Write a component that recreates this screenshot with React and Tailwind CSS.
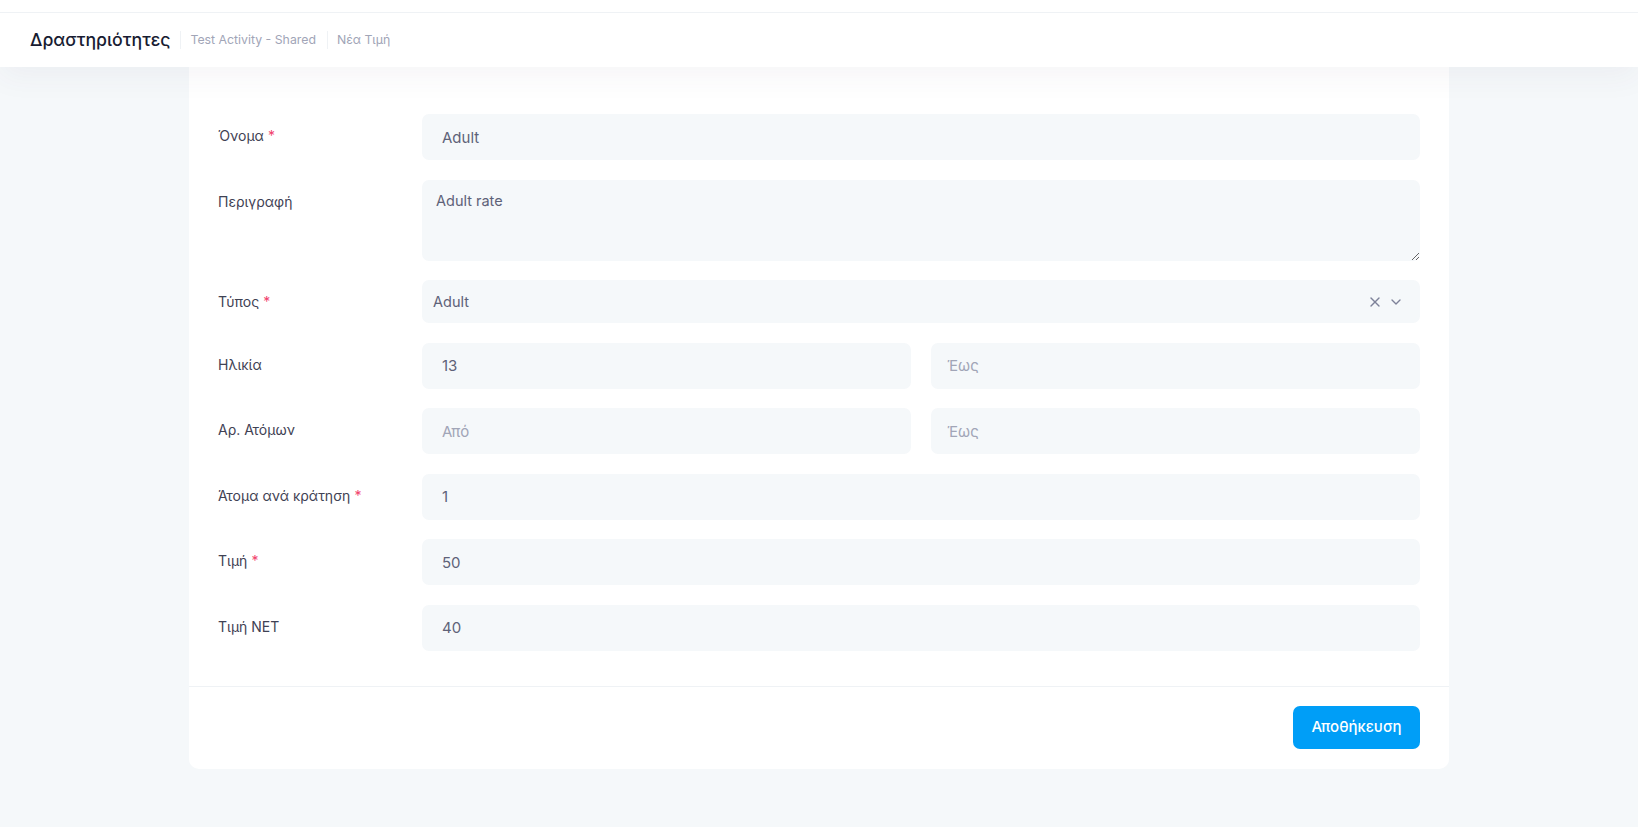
import { X, ChevronDown } from "lucide-react";

const fieldBase =
  "w-full h-[46px] rounded-[7px] bg-[#f5f8fa] px-[20px] text-[15px] text-[#5e6278] outline-none placeholder:text-[#a1a5b7]";

function Label({ children, required }) {
  return (
    <div className="pt-[12px] text-[14px] leading-5 text-[#3f4254]">
      {children}
      {required && <span className="ml-1 text-[#f1416c]">*</span>}
    </div>
  );
}

export default function App() {
  return (
    <div className="min-h-screen bg-[#f5f8fa]" style={{ fontFamily: "Inter, 'Noto Sans', sans-serif" }}>
      {/* top strip */}
      <div className="relative z-20 h-[13px] bg-white border-b border-[#eff2f5]" />

      {/* page header */}
      <div className="relative z-10 flex h-[54px] items-center bg-white px-[30px] shadow-[0_10px_30px_0_rgba(82,63,105,0.05)]">
        <h1 className="text-[17.7px] font-medium text-[#181c32]">Δραστηριότητες</h1>
        <span className="ml-[10px] border-l border-[#eff2f5] pl-[9px] text-[12.3px] leading-[18px] text-[#a1a5b7]">
          Test Activity - Shared
        </span>
        <span className="ml-[11px] border-l border-[#eff2f5] pl-[9px] text-[12.3px] leading-[18px] text-[#a1a5b7]">
          Νέα Τιμή
        </span>
      </div>

      <div className="mx-auto w-[1260px] -mt-[40px] pb-[58px]">
        <div className="rounded-[10px] bg-white">
          <div className="grid grid-cols-[204px_1fr] gap-y-[19.5px] px-[29px] pt-[87px] pb-[35px]">
            <Label required>Όνομα</Label>
            <input className={fieldBase} defaultValue="Adult" />

            <Label>Περιγραφή</Label>
            <textarea
              className="w-full h-[81px] resize-y rounded-[7px] bg-[#f5f8fa] px-[14px] py-[10px] text-[14.5px] text-[#5e6278] outline-none"
              defaultValue="Adult rate"
            />

            <Label required>Τύπος</Label>
            <div className="flex h-[43px] items-center rounded-[7px] bg-[#f5f8fa] pl-[11px] pr-[16px] text-[14.5px] text-[#5e6278]">
              <span className="flex-1">Adult</span>
              <X size={16} strokeWidth={2} className="text-[#7e8299]" />
              <ChevronDown size={16} strokeWidth={2} className="ml-[5px] text-[#7e8299]" />
            </div>

            <Label>Ηλικία</Label>
            <div className="grid grid-cols-2 gap-x-[20px]">
              <input className={fieldBase} defaultValue="13" />
              <input className={`${fieldBase} !px-[16px]`} placeholder="Έως" />
            </div>

            <Label>Αρ. Ατόμων</Label>
            <div className="grid grid-cols-2 gap-x-[20px]">
              <input className={fieldBase} placeholder="Από" />
              <input className={`${fieldBase} !px-[16px]`} placeholder="Έως" />
            </div>

            <Label required>Άτομα ανά κράτηση</Label>
            <input className={fieldBase} defaultValue="1" />

            <Label required>Τιμή</Label>
            <input className={fieldBase} defaultValue="50" />

            <Label>Τιμή NET</Label>
            <input className={fieldBase} defaultValue="40" />
          </div>

          <div className="flex justify-end border-t border-[#eff2f5] px-[29px] pt-[19px] pb-[20px]">
            <button className="h-[43px] w-[127px] rounded-[7px] bg-[#009ef7] text-[15px] font-medium text-white">
              Αποθήκευση
            </button>
          </div>
        </div>
      </div>
    </div>
  );
}
